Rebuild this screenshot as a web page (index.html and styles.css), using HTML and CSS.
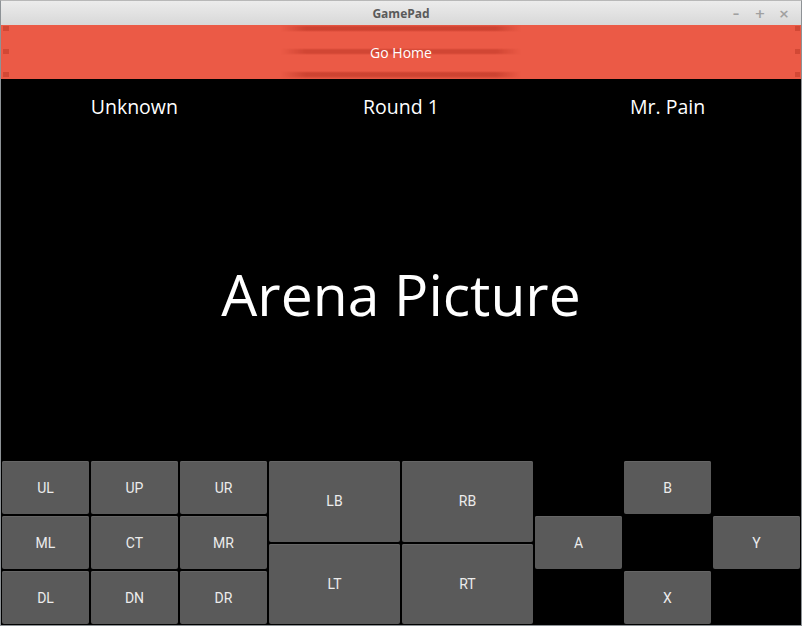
FILE: index.html
```html
<!DOCTYPE html>
<html>
<head>
<meta charset="utf-8">
<link rel="stylesheet" href="styles.css">
</head>
<body>
<div class="window">
  <div class="titlebar">
    <span class="title">GamePad</span>
    <div class="controls"><span>&#8211;</span><span>+</span><span>&#215;</span></div>
  </div>
  <div class="home">
    <span class="home-label">Go Home</span>
  </div>
  <div class="content">
    <div class="info">
      <div class="info-item">Unknown</div>
      <div class="info-item">Round 1</div>
      <div class="info-item">Mr. Pain</div>
    </div>
    <div class="arena">Arena Picture</div>
    <div class="pad">
      <button class="btn c1 r1">UL</button>
      <button class="btn c2 r1">UP</button>
      <button class="btn c3 r1">UR</button>
      <button class="btn c1 r2">ML</button>
      <button class="btn c2 r2">CT</button>
      <button class="btn c3 r2">MR</button>
      <button class="btn c1 r3">DL</button>
      <button class="btn c2 r3">DN</button>
      <button class="btn c3 r3">DR</button>
      <button class="btn lb">LB</button>
      <button class="btn lt">LT</button>
      <button class="btn rb">RB</button>
      <button class="btn rt">RT</button>
      <button class="btn ba">A</button>
      <button class="btn bb">B</button>
      <button class="btn bx">X</button>
      <button class="btn by">Y</button>
    </div>
  </div>
</div>
</body>
</html>
```
FILE: styles.css
```css
html, body {
  margin: 0;
  padding: 0;
  background: #000;
}
.window {
  width: 802px;
  height: 626px;
  box-sizing: border-box;
  border: 1px solid #8d9296;
  border-top-color: #b8b8b8;
  display: flex;
  flex-direction: column;
  background: #000;
  overflow: hidden;
}
.titlebar {
  height: 24px;
  flex: none;
  background: linear-gradient(#ececec, #d8d8d8);
  display: flex;
  align-items: center;
  justify-content: center;
  position: relative;
  font-family: "Open Sans", "DejaVu Sans", sans-serif;
}
.title {
  font-weight: bold;
  font-size: 12px;
  color: #5a5a5a;
}
.controls {
  position: absolute;
  right: 10px;
  top: 0;
  height: 24px;
  display: flex;
  align-items: center;
  gap: 10px;
  font-family: "DejaVu Sans", sans-serif;
  font-weight: bold;
  font-size: 13px;
  color: #a0a0a0;
}
.controls span {
  width: 14px;
  text-align: center;
}
.home {
  height: 54px;
  flex: none;
  background: #eb5a46;
  display: flex;
  align-items: center;
  justify-content: center;
  position: relative;
}
.home::before {
  content: "";
  position: absolute;
  left: 280px;
  width: 240px;
  top: 0;
  bottom: 0;
  background: linear-gradient(to bottom,
    rgba(170,40,25,0) 0px, rgba(170,40,25,0.45) 2px, rgba(170,40,25,0.45) 5px, rgba(170,40,25,0) 7px,
    rgba(170,40,25,0) 23px, rgba(170,40,25,0.4) 25px, rgba(170,40,25,0.4) 28px, rgba(170,40,25,0) 30px,
    rgba(170,40,25,0) 46px, rgba(170,40,25,0.45) 48px, rgba(170,40,25,0.45) 51px, rgba(170,40,25,0) 54px);
  -webkit-mask-image: linear-gradient(to right, transparent 0, #000 25px, #000 215px, transparent 240px);
  mask-image: linear-gradient(to right, transparent 0, #000 25px, #000 215px, transparent 240px);
}
.home::after {
  content: "";
  position: absolute;
  left: 1px;
  right: 1px;
  top: 0;
  bottom: 0;
  background:
    linear-gradient(#c8412f, #c8412f) left 1px top 1px / 6px 5px no-repeat,
    linear-gradient(#c8412f, #c8412f) left 1px top 24px / 6px 5px no-repeat,
    linear-gradient(#c8412f, #c8412f) left 1px top 47px / 6px 5px no-repeat,
    linear-gradient(#c8412f, #c8412f) right 0 top 1px / 5px 5px no-repeat,
    linear-gradient(#c8412f, #c8412f) right 0 top 24px / 5px 5px no-repeat,
    linear-gradient(#c8412f, #c8412f) right 0 top 47px / 5px 5px no-repeat;
  opacity: 0.7;
}
.home-label {
  position: relative;
  z-index: 1;
  font-family: "Open Sans", "Noto Sans", sans-serif;
  font-size: 14px;
  color: #fff;
}
.content {
  flex: 1;
  display: flex;
  flex-direction: column;
  background: #000;
}
.info {
  display: grid;
  grid-template-columns: 1fr 1fr 1fr;
  height: 54px;
  align-items: center;
  font-family: "Open Sans", "Noto Sans", sans-serif;
  font-size: 19.5px;
  color: #fff;
}
.info-item {
  text-align: center;
}
.arena {
  flex: 1;
  display: flex;
  align-items: center;
  justify-content: center;
  font-family: "Open Sans", "Noto Sans", sans-serif;
  font-size: 57px;
  color: #fff;
  padding-bottom: 6px;
}
.pad {
  height: 165px;
  flex: none;
  display: grid;
  grid-template-columns: 89px 89px 89px 133px 133px 89px 89px 89px;
  grid-template-rows: repeat(6, 27.5px);
}
.btn {
  margin: 1px;
  border: none;
  border-radius: 2px;
  background: #5a5a5a;
  box-shadow: inset 0 1px 0 #666, 0 1px 1px rgba(0,0,0,0.6);
  color: #ececec;
  font-family: Roboto, "Noto Sans", sans-serif;
  font-size: 14px;
  padding: 0;
}
.c1 { grid-column: 1; }
.c2 { grid-column: 2; }
.c3 { grid-column: 3; }
.r1 { grid-row: 1 / span 2; }
.r2 { grid-row: 3 / span 2; }
.r3 { grid-row: 5 / span 2; }
.lb { grid-column: 4; grid-row: 1 / span 3; }
.lt { grid-column: 4; grid-row: 4 / span 3; }
.rb { grid-column: 5; grid-row: 1 / span 3; }
.rt { grid-column: 5; grid-row: 4 / span 3; }
.ba { grid-column: 6; grid-row: 3 / span 2; }
.bb { grid-column: 7; grid-row: 1 / span 2; }
.bx { grid-column: 7; grid-row: 5 / span 2; }
.by { grid-column: 8; grid-row: 3 / span 2; }
```
